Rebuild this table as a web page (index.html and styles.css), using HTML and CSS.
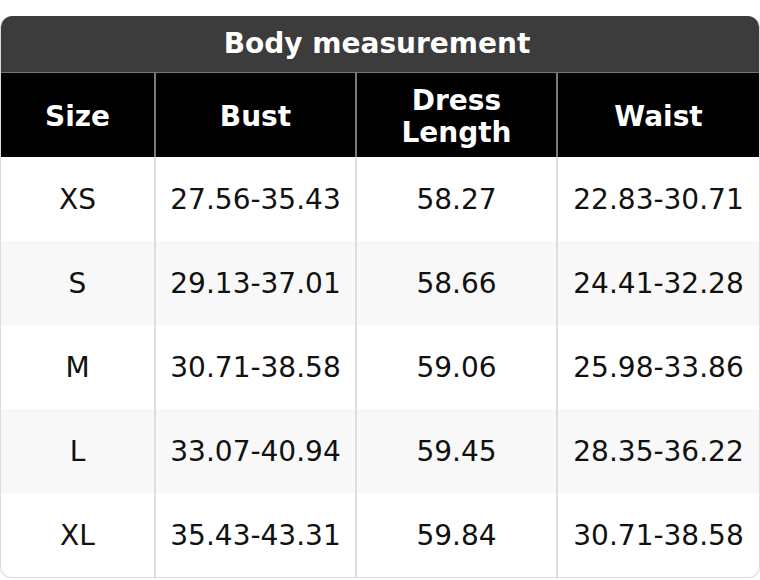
FILE: index.html
```html
<!DOCTYPE html>
<html>
<head>
<meta charset="utf-8">
<link rel="stylesheet" href="styles.css">
</head>
<body>
<div class="card">
  <div class="title">Body measurement</div>
  <table class="sizes">
    <colgroup>
      <col class="c1"><col class="c2"><col class="c3"><col class="c4">
    </colgroup>
    <thead>
      <tr><th>Size</th><th>Bust</th><th>Dress<br>Length</th><th>Waist</th></tr>
    </thead>
    <tbody>
      <tr><td>XS</td><td>27.56-35.43</td><td>58.27</td><td>22.83-30.71</td></tr>
      <tr><td>S</td><td>29.13-37.01</td><td>58.66</td><td>24.41-32.28</td></tr>
      <tr><td>M</td><td>30.71-38.58</td><td>59.06</td><td>25.98-33.86</td></tr>
      <tr><td>L</td><td>33.07-40.94</td><td>59.45</td><td>28.35-36.22</td></tr>
      <tr><td>XL</td><td>35.43-43.31</td><td>59.84</td><td>30.71-38.58</td></tr>
    </tbody>
  </table>
</div>
</body>
</html>
```
FILE: styles.css
```css
html, body {
  margin: 0;
  padding: 0;
  background: #fff;
}
body {
  padding-top: 16px;
  font-family: "DejaVu Sans", sans-serif;
}
.card {
  width: 760px;
  box-sizing: border-box;
  border: 1px solid #dcdcdc;
  border-top: none;
  border-radius: 12px;
  overflow: hidden;
  box-shadow: 0 1px 2px rgba(0,0,0,0.08);
}
.title {
  background: #3c3c3c;
  color: #fff;
  font-weight: bold;
  font-size: 28px;
  line-height: 56px;
  height: 56px;
  text-align: center;
  padding-right: 6px;
  border-bottom: 1px solid #777;
}
.sizes {
  width: 100%;
  border-collapse: collapse;
  table-layout: fixed;
}
.c1 { width: 154px; }
.c2 { width: 201px; }
.c3 { width: 201px; }
.sizes th {
  background: #000;
  color: #fff;
  font-weight: bold;
  font-size: 28px;
  line-height: 32px;
  height: 81px;
  padding: 3px 0 0;
  text-align: center;
  border-left: 2px solid #7a7a7a;
}
.sizes th:first-child, .sizes td:first-child { border-left: none; }
.sizes td {
  font-size: 28px;
  color: #111;
  height: 84px;
  padding: 0;
  text-align: center;
  border-left: 2px solid #dedede;
}
.sizes tbody tr:nth-child(even) td { background: #f8f8f8; }
```
